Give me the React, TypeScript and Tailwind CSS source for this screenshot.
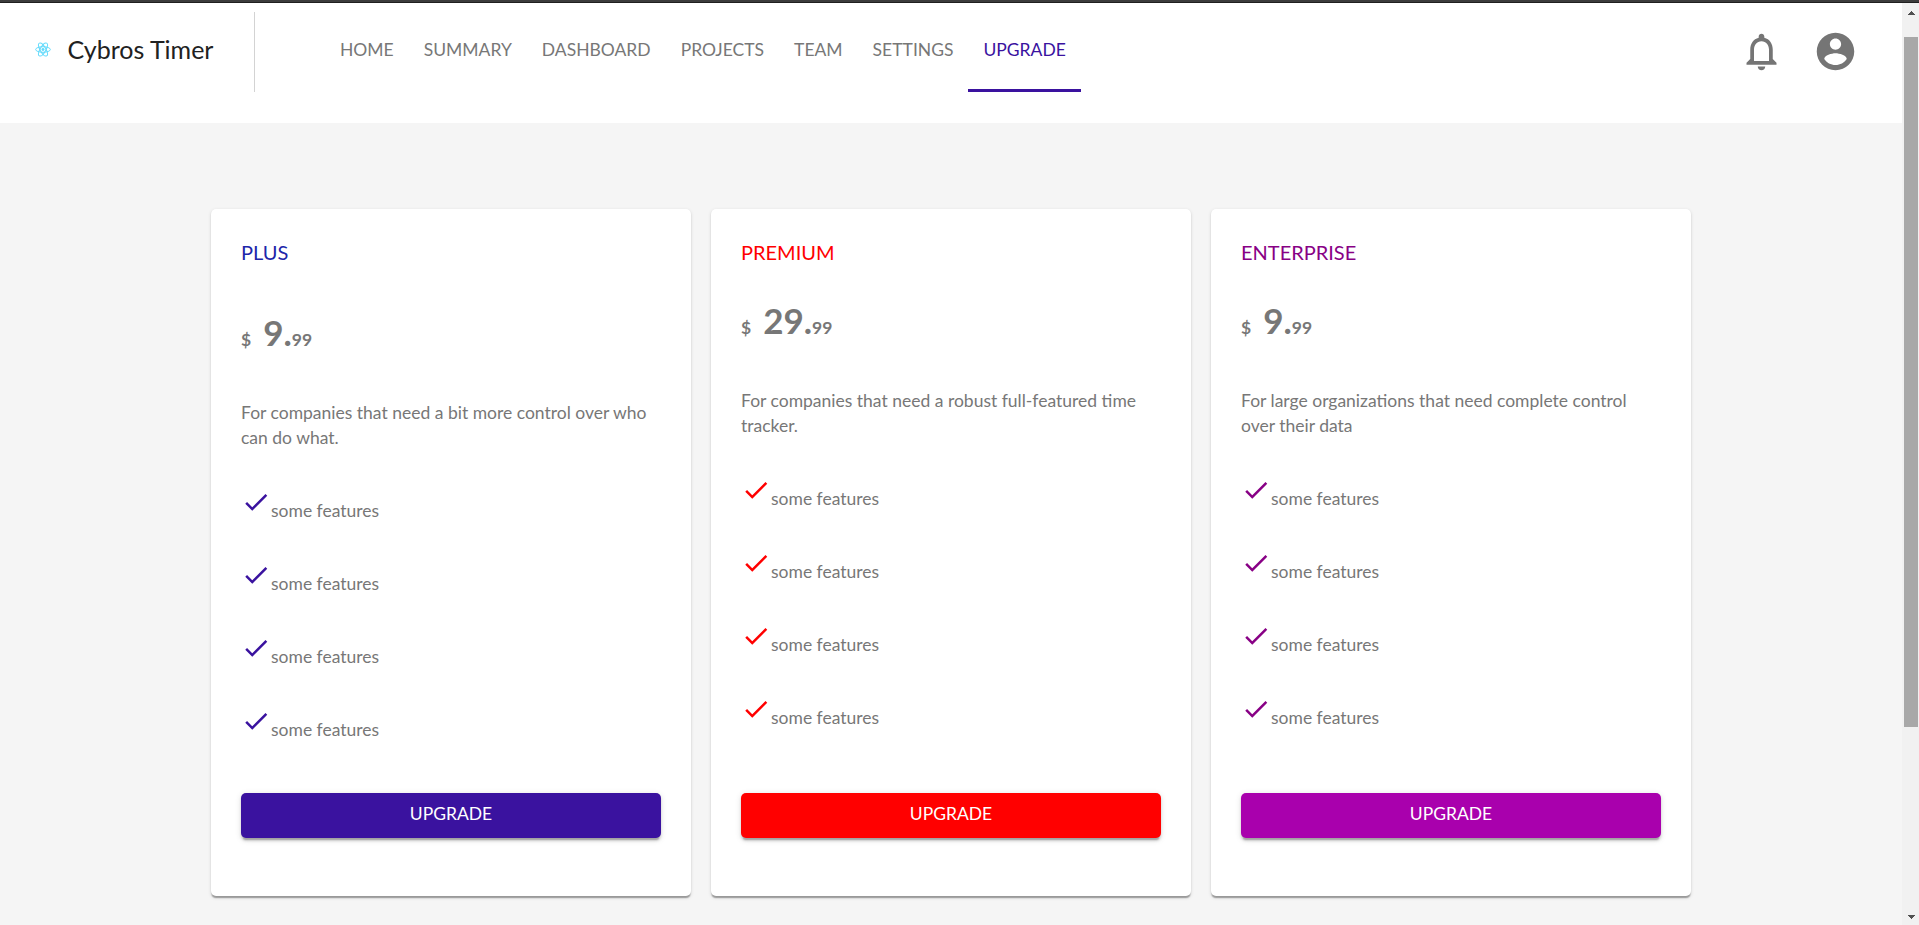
import React from 'react';

const NAV = ['HOME', 'SUMMARY', 'DASHBOARD', 'PROJECTS', 'TEAM', 'SETTINGS', 'UPGRADE'];

type Plan = {
  name: string;
  whole: string;
  text: string;
  title: string;
  check: string;
  button: string;
  price: string;
};

const PLANS: Plan[] = [
  {
    name: 'PLUS',
    whole: '9.',
    text: 'For companies that need a bit more control over who can do what.',
    title: 'text-[#2025aa]',
    check: 'text-[#3a129f]',
    button: 'bg-[#3a129f]',
    price: 'mt-[46px]',
  },
  {
    name: 'PREMIUM',
    whole: '29.',
    text: 'For companies that need a robust full-featured time tracker.',
    title: 'text-[#ff0000]',
    check: 'text-[#ff0000]',
    button: 'bg-[#ff0000]',
    price: 'mt-[34px]',
  },
  {
    name: 'ENTERPRISE',
    whole: '9.',
    text: 'For large organizations that need complete control over their data',
    title: 'text-[#880085]',
    check: 'text-[#880085]',
    button: 'bg-[#a900ad]',
    price: 'mt-[34px]',
  },
];

const FEATURES = ['some features', 'some features', 'some features', 'some features'];

function Logo() {
  return (
    <svg viewBox="0 0 24 22" className="h-[15px] w-4 text-[#61dafb]" fill="none" stroke="currentColor" strokeWidth="1.5">
      <circle cx="12" cy="11" r="2.2" fill="currentColor" stroke="none" />
      <ellipse cx="12" cy="11" rx="11" ry="4.2" />
      <ellipse cx="12" cy="11" rx="11" ry="4.2" transform="rotate(60 12 11)" />
      <ellipse cx="12" cy="11" rx="11" ry="4.2" transform="rotate(120 12 11)" />
    </svg>
  );
}

function Header() {
  return (
    <header className="flex h-[120px] items-start bg-white">
      <div className="mt-[9px] flex h-20 w-[255px] shrink-0 items-start border-r border-[#d3d3d3] pl-[34.5px]">
        <div className="mt-[30px]">
          <Logo />
        </div>
        <h1 className="mt-[22px] ml-[17px] text-[25px] leading-[30px] text-[#212121]">Cybros Timer</h1>
      </div>
      <nav className="mt-[9px] ml-[70px] flex">
        {NAV.map((item) => (
          <a
            key={item}
            className={
              item === 'UPGRADE'
                ? 'h-20 border-b-[3px] border-[#3a129f] px-[15px] pt-[25px] text-[17.5px] leading-[25px] text-[#3a129f]'
                : 'h-20 px-[15px] pt-[25px] text-[17.5px] leading-[25px] text-[#777777]'
            }
          >
            {item}
          </a>
        ))}
      </nav>
      <div className="mt-[26px] mr-[44.5px] ml-auto flex gap-[28.5px] text-[#757575]">
        <svg viewBox="0 0 24 24" className="size-[45px]" fill="currentColor">
          <path d="M12 22c1.1 0 2-.9 2-2h-4c0 1.1.9 2 2 2zm6-6v-5c0-3.07-1.63-5.64-4.5-6.32V4c0-.83-.67-1.5-1.5-1.5s-1.5.67-1.5 1.5v.68C7.64 5.36 6 7.92 6 11v5l-2 2v1h16v-1l-2-2zm-2 1H8v-6c0-2.48 1.51-4.5 4-4.5s4 2.02 4 4.5v6z" />
        </svg>
        <svg viewBox="0 0 24 24" className="size-[45px]" fill="currentColor">
          <path d="M12 2C6.48 2 2 6.48 2 12s4.48 10 10 10 10-4.48 10-10S17.52 2 12 2zm0 3c1.66 0 3 1.34 3 3s-1.34 3-3 3-3-1.34-3-3 1.34-3 3-3zm0 14.2c-2.5 0-4.71-1.28-6-3.22.03-1.99 4-3.08 6-3.08 1.99 0 5.97 1.09 6 3.08-1.29 1.94-3.5 3.22-6 3.22z" />
        </svg>
      </div>
    </header>
  );
}

function PlanCard({ plan }: { plan: Plan }) {
  return (
    <section className="flex h-[687px] w-[480px] flex-col rounded-[5px] bg-white px-[30px] pt-[30px] pb-[58px] shadow-[0_2.5px_1.25px_-1.25px_rgba(0,0,0,0.2),0_1.25px_1.25px_0_rgba(0,0,0,0.14),0_1.25px_3.75px_0_rgba(0,0,0,0.12)]">
      <h2 className={`text-[20px] leading-[26px] ${plan.title}`}>{plan.name}</h2>
      <p className={`flex items-baseline font-bold ${plan.price}`}>
        <span className="text-[17.5px] leading-5">$</span>
        <span className="ml-3 text-[35px] leading-[42px]">{plan.whole}</span>
        <span className="text-[17.5px] leading-5">99</span>
      </p>
      <p className="mt-[47px] text-[17.5px] leading-[25px]">{plan.text}</p>
      <ul className="mt-[37px]">
        {FEATURES.map((feature, i) => (
          <li key={i} className="flex h-[73px] items-baseline">
            <svg viewBox="0 0 24 24" className={`size-[30px] ${plan.check}`} fill="currentColor">
              <path d="M9 16.17L4.83 12l-1.42 1.41L9 19 21 7l-1.41-1.41z" />
            </svg>
            <span className="text-[17.5px] leading-[21px]">{feature}</span>
          </li>
        ))}
      </ul>
      <button
        className={`mt-auto h-[45px] shrink-0 rounded-[5px] pb-1 text-[17.5px] leading-[25px] text-white shadow-[0_3.75px_1.25px_-2.5px_rgba(0,0,0,0.2),0_2.5px_2.5px_0_rgba(0,0,0,0.14),0_1.25px_6.25px_0_rgba(0,0,0,0.12)] ${plan.button}`}
      >
        UPGRADE
      </button>
    </section>
  );
}

function Scrollbar() {
  return (
    <div className="flex w-[17px] shrink-0 flex-col items-center bg-[#f1f1f1] pt-2 pb-1.5 text-[#505050]">
      <svg viewBox="0 0 8 4" className="h-1 w-2" fill="currentColor" shapeRendering="crispEdges">
        <path d="M0 4L4 0L8 4z" />
      </svg>
      <div className="mt-[22px] h-[690px] w-[14px] bg-[#a8a8a8]" />
      <svg viewBox="0 0 8 4" className="mt-auto h-1 w-2" fill="currentColor" shapeRendering="crispEdges">
        <path d="M0 0L4 4L8 0z" />
      </svg>
    </div>
  );
}

export default function App() {
  return (
    <div className="flex h-[925px] w-[1919px] flex-col overflow-hidden bg-[#f5f5f5] font-['Lato',sans-serif] text-[#777777]">
      <div className="h-[3px] shrink-0 border-b border-[#1f1f1f] bg-[#3c3c3c]" />
      <div className="flex min-h-0 flex-1">
        <div className="min-w-0 flex-1">
          <Header />
          <main className="flex justify-center gap-5 pt-[86px]">
            {PLANS.map((plan) => (
              <PlanCard key={plan.name} plan={plan} />
            ))}
          </main>
        </div>
        <Scrollbar />
      </div>
    </div>
  );
}
